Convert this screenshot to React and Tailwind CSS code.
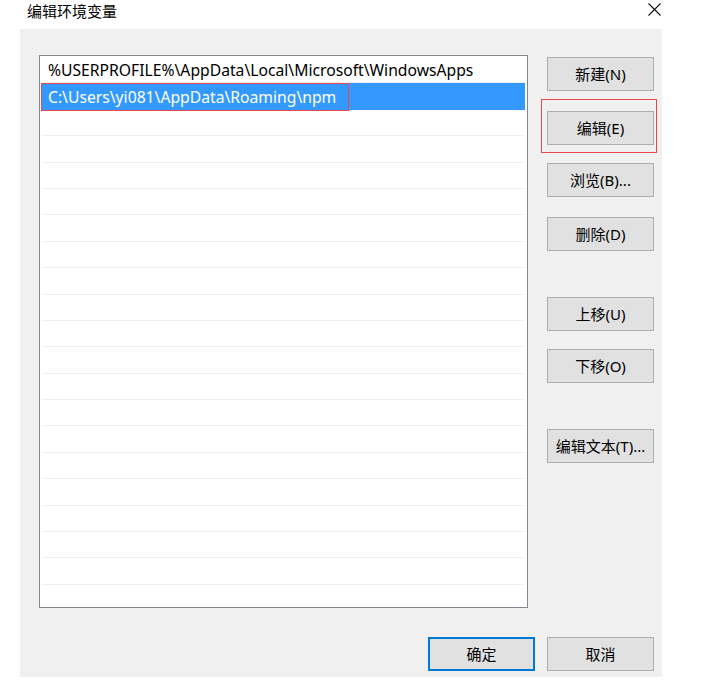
import React from 'react';

const FONT = '"Noto Sans", "Noto Sans CJK SC", sans-serif';

const Btn = ({ children, className = '' }) => (
    <div
        className={`w-[107px] h-[34px] flex items-center justify-center bg-[#e1e1e1] border border-[#adadad] text-[15px] text-black ${className}`}
    >
        {children}
    </div>
);

const ROWS = [
    '%USERPROFILE%\\AppData\\Local\\Microsoft\\WindowsApps',
    'C:\\Users\\yi081\\AppData\\Roaming\\npm',
];

export default function App() {
    const rows = Array.from({ length: 21 }, (_, i) => ROWS[i] || '');

    return (
        <div className="w-[725px] h-[688px] bg-white relative overflow-hidden" style={{ fontFamily: FONT }}>
            {/* Title bar */}
            <div className="h-[29px] flex items-start">
                <div className="pl-[27px] pt-[1px] text-[15px] leading-[20px] text-black">编辑环境变量</div>
                <svg className="ml-auto mr-[64px] mt-[3px]" width="13" height="13" viewBox="0 0 13 13">
                    <path d="M0.5 0.5 L12.5 12.5 M12.5 0.5 L0.5 12.5" stroke="#111" strokeWidth="1.1" fill="none" />
                </svg>
            </div>

            {/* Dialog body */}
            <div className="ml-[20px] w-[642px] h-[648px] bg-[#f0f0f0] flex flex-col">
                <div className="flex pt-[26px] pl-[19px]">
                    {/* List box */}
                    <div className="relative w-[489px] h-[553px] bg-white border border-[#828790] pt-[1px] px-[2px] overflow-hidden">
                        {rows.map((text, i) => {
                            const selected = i === 1;
                            return (
                                <div
                                    key={i}
                                    className={`h-[26.4px] flex items-center pl-[6px] pt-[2px] text-[15.7px] whitespace-nowrap ${
                                        selected ? 'bg-[#3399ff] text-white' : 'text-black border-b border-[#f0f0f0]'
                                    }`}
                                >
                                    {text}
                                </div>
                            );
                        })}
                        {/* annotation box */}
                        <div className="absolute left-[1px] top-[27px] w-[308px] h-[28px] border border-[#e8474c]" />
                    </div>

                    {/* Button column */}
                    <div className="relative ml-[19px] pt-[2px] flex flex-col">
                        <Btn>新建(N)</Btn>
                        <Btn className="mt-[20px]">编辑(E)</Btn>
                        <Btn className="mt-[18px]">浏览(B)...</Btn>
                        <Btn className="mt-[20px]">删除(D)</Btn>
                        <Btn className="mt-[46px]">上移(U)</Btn>
                        <Btn className="mt-[18px]">下移(O)</Btn>
                        <Btn className="mt-[46px]">编辑文本(T)...</Btn>
                        <div className="absolute left-[-6px] top-[44px] w-[116px] h-[54px] border border-[#e8474c]" />
                    </div>
                </div>

                {/* Bottom buttons */}
                <div className="mt-[29px] flex justify-end gap-[12px] pr-[8px]">
                    <div className="w-[107px] h-[34px] flex items-center justify-center bg-[#e1e1e1] border-2 border-[#0078d7] text-[15px] text-black">
                        确定
                    </div>
                    <Btn>取消</Btn>
                </div>
            </div>
        </div>
    );
}
